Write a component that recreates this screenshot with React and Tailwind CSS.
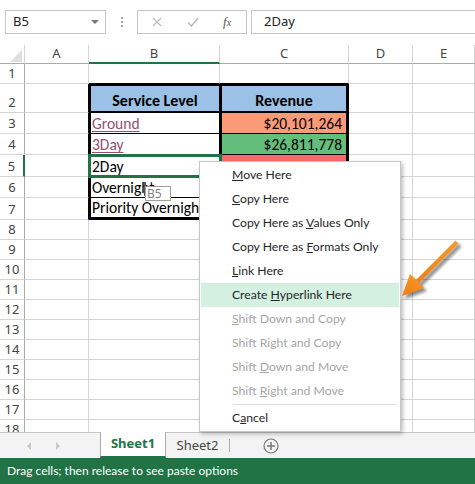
import React from "react";

const ui = "font-['Segoe_UI','Noto_Sans',sans-serif]";
const lato = "font-['Segoe_UI','Lato',sans-serif]";
const cellFont = "font-['Carlito','Lato',sans-serif] text-[15.5px] leading-[18px]";
const base = "shrink-0 h-full flex overflow-hidden whitespace-nowrap";
const grid = "border-r border-b border-[#d4d4d4]";

function RowHead({ n, sel }) {
  return (
    <div
      className={`${base} ${ui} w-[25px] items-end justify-center pb-[1px] text-[13px] leading-[18px] text-[#444] border-b border-b-[#d4d4d4] ${
        sel ? "border-r-2 border-r-[#217346]" : "border-r border-r-[#ababab]"
      }`}
    >
      {n}
    </div>
  );
}

function EmptyRow({ n }) {
  return (
    <div className="flex h-[20px]">
      <RowHead n={n} />
      <div className={`${base} w-[64px] ${grid}`} />
      <div className={`${base} w-[131px] ${grid}`} />
      <div className={`${base} w-[129px] ${grid}`} />
      <div className={`${base} w-[64px] ${grid}`} />
      <div className={`${base} w-[62px] ${grid}`} />
    </div>
  );
}

const aTable = "border-r border-b border-r-black border-b-[#d4d4d4]";

function Arrow() {
  return (
    <svg className="absolute left-[390px] top-[230px]" width="80" height="80" viewBox="390 230 80 80">
      <defs>
        <filter id="blur" x="-20%" y="-20%" width="140%" height="140%">
          <feGaussianBlur stdDeviation="1.6" />
        </filter>
        <linearGradient id="og" x1="0" y1="1" x2="1" y2="0">
          <stop offset="0" stopColor="#f07c12" />
          <stop offset="1" stopColor="#fb9a2b" />
        </linearGradient>
      </defs>
      <g transform="translate(3,3)" filter="url(#blur)" fill="#000" opacity="0.45">
        <polygon points="455.5,240.5 458.5,243.5 419,283 416,280" />
        <polygon points="402,296 410,274 424,288" />
      </g>
      <polygon points="455.5,240.5 458.5,243.5 419,283 416,280" fill="url(#og)" />
      <polygon points="402,296 410,274 424,288" fill="url(#og)" />
    </svg>
  );
}

function MenuItem({ children, disabled, hi }) {
  return (
    <div
      className={`h-[24px] flex items-center pl-[31px] text-[12.2px] ${
        disabled ? "text-[#a6a6a6]" : "text-[#262626]"
      } ${hi ? "bg-[#d3f0e0]" : ""}`}
    >
      <span>{children}</span>
    </div>
  );
}

export default function App() {
  return (
    <div className={`relative w-[475px] h-[484px] bg-white overflow-hidden ${ui}`}>
      {/* formula bar */}
      <div className="h-[45px] flex items-start pt-[10px] pl-[5px]">
        <div className="w-[101px] h-[24px] border border-[#c6c6c6] flex items-center justify-between pl-[7px] pr-[6px]">
          <span className="text-[13px] text-[#222]">B5</span>
          <span className="w-0 h-0 border-l-[4px] border-r-[4px] border-t-[4px] border-l-transparent border-r-transparent border-t-[#777]" />
        </div>
        <div className="w-[31px] h-[24px] flex flex-col items-center justify-center gap-[2px]">
          <span className="w-[2px] h-[2px] bg-[#a6a6a6]" />
          <span className="w-[2px] h-[2px] bg-[#a6a6a6]" />
          <span className="w-[2px] h-[2px] bg-[#a6a6a6]" />
        </div>
        <div className="w-[110px] h-[24px] border border-[#c6c6c6] flex items-center">
          <svg className="ml-[14px]" width="10" height="10" viewBox="0 0 10 10">
            <path d="M1 1 L9 9 M9 1 L1 9" stroke="#bdbdbd" strokeWidth="1.2" />
          </svg>
          <svg className="ml-[25px]" width="12" height="10" viewBox="0 0 12 10">
            <path d="M1 5.5 L4.5 9 L11 1" stroke="#bdbdbd" strokeWidth="1.6" fill="none" />
          </svg>
          <span className="ml-[24px] font-['Liberation_Serif',serif] italic text-[13px] text-[#555]">
            f<span className="text-[10px]">x</span>
          </span>
        </div>
        <div className="ml-[4px] flex-1 h-[24px] border border-r-0 border-[#c6c6c6] flex items-center pl-[12px]">
          <span className="text-[13px] text-[#222]">2Day</span>
        </div>
      </div>

      {/* sheet */}
      <div className="h-[387px] overflow-hidden">
        {/* column headers */}
        <div className="flex h-[19px] text-[13px] text-[#444]">
          <div className={`${base} w-[25px] border-r border-b border-r-[#d4d4d4] border-b-[#ababab] items-end justify-end pr-[2px] pb-[1px]`}>
            <svg width="12" height="12" viewBox="0 0 12 12">
              <polygon points="0,12 12,12 12,0" fill="#dfdfdf" />
            </svg>
          </div>
          <div className={`${base} w-[64px] border-r border-b border-r-[#d4d4d4] border-b-[#ababab] items-center justify-center`}>A</div>
          <div className={`${base} w-[131px] border-r border-b-2 border-r-[#d4d4d4] border-b-[#217346] items-center justify-center`}>B</div>
          <div className={`${base} w-[129px] border-r border-b border-r-[#d4d4d4] border-b-[#ababab] items-center justify-center`}>C</div>
          <div className={`${base} w-[64px] border-r border-b border-r-[#d4d4d4] border-b-[#ababab] items-center justify-center`}>D</div>
          <div className={`${base} w-[62px] border-r border-b border-r-[#d4d4d4] border-b-[#ababab] items-center justify-center`}>E</div>
        </div>

        {/* row 1 */}
        <div className="flex h-[20px]">
          <RowHead n={1} />
          <div className={`${base} w-[64px] ${grid}`} />
          <div className={`${base} w-[131px] border-r border-b border-r-[#d4d4d4] border-b-black`} />
          <div className={`${base} w-[129px] border-r border-b border-r-[#d4d4d4] border-b-black`} />
          <div className={`${base} w-[64px] ${grid}`} />
          <div className={`${base} w-[62px] ${grid}`} />
        </div>

        {/* row 2 */}
        <div className={`flex h-[29px] ${cellFont}`}>
          <RowHead n={2} />
          <div className={`${base} w-[64px] ${aTable}`} />
          <div className={`${base} w-[131px] border-l-2 border-t-2 border-r border-b-2 border-black bg-[#9bc2e6] items-end justify-center font-bold text-[16px] leading-[20px]`}>
            Service Level
          </div>
          <div className={`${base} w-[129px] border-l-2 border-t-2 border-r-[3px] border-b-2 border-black bg-[#9bc2e6] items-end justify-center font-bold text-[16px] leading-[20px]`}>
            Revenue
          </div>
          <div className={`${base} w-[64px] ${grid}`} />
          <div className={`${base} w-[62px] ${grid}`} />
        </div>

        {/* rows 3-7 */}
        {[
          { n: 3, h: "h-[21px]", b: "Ground", link: true, c: "$20,101,264", bg: "bg-[#fa9a79]" },
          { n: 4, h: "h-[21px]", b: "3Day", link: true, c: "$26,811,778", bg: "bg-[#63be7b]" },
          { n: 5, h: "h-[22px]", b: "2Day", c: "$14,523,900", bg: "bg-[#f8696b]", sel: true },
          { n: 6, h: "h-[21px]", b: "Overnight", c: "$18,220,415", bg: "bg-[#fcc47e]" },
          { n: 7, h: "h-[22px]", b: "Priority Overnight", c: "$16,302,118", bg: "bg-[#fba276]", last: true },
        ].map((r) => (
          <div key={r.n} className={`flex ${r.h} ${cellFont}`}>
            <RowHead n={r.n} sel={r.sel} />
            <div className={`${base} w-[64px] ${aTable}`} />
            <div
              className={`${base} w-[131px] border-l-2 border-r border-black items-end pl-[1px] ${
                r.last ? "border-b-[3px]" : "border-b"
              }`}
            >
              {r.link ? <span className="text-[#954f72] underline underline-offset-2">{r.b}</span> : <span className="text-black">{r.b}</span>}
            </div>
            <div
              className={`${base} w-[129px] border-l-2 border-r-[3px] border-black items-end justify-end pr-[4px] ${r.bg} ${
                r.last ? "border-b-[3px]" : "border-b"
              }`}
            >
              {r.c}
            </div>
            <div className={`${base} w-[64px] ${grid}`} />
            <div className={`${base} w-[62px] ${grid}`} />
          </div>
        ))}

        {[8, 9, 10, 11, 12, 13, 14, 15, 16, 17, 18].map((n) => (
          <EmptyRow key={n} n={n} />
        ))}
      </div>

      {/* tab bar */}
      <div className="h-[26px] bg-[#f3f3f3] border-t border-[#c6c6c6] flex items-stretch">
        <div className="w-[100px] flex items-center">
          <span className="ml-[27px] w-0 h-0 border-t-[4px] border-b-[4px] border-r-[4px] border-t-transparent border-b-transparent border-r-[#c8c8c8]" />
          <span className="ml-[25px] w-0 h-0 border-t-[4px] border-b-[4px] border-l-[4px] border-t-transparent border-b-transparent border-l-[#c8c8c8]" />
        </div>
        <div className="-mt-px w-[66px] bg-white border-l border-r border-b-2 border-l-[#ababab] border-r-[#ababab] border-b-[#217346] flex items-center justify-center text-[13px] font-bold text-[#217346]">
          Sheet1
        </div>
        <div className="w-[63px] flex items-center justify-center text-[13px] text-[#444]">Sheet2</div>
        <div className="w-px h-[13px] self-center bg-[#ababab]" />
        <div className="flex items-center ml-[33px]">
          <svg width="16" height="16" viewBox="0 0 16 16">
            <circle cx="8" cy="8" r="7" fill="none" stroke="#777" strokeWidth="1.2" />
            <path d="M8 4 V12 M4 8 H12" stroke="#777" strokeWidth="1.5" />
          </svg>
        </div>
      </div>

      {/* status bar */}
      <div className={`h-[26px] bg-[#217346] flex items-center pl-[7px] text-[12px] text-white ${lato}`}>
        Drag cells; then release to see paste options
      </div>

      {/* selection outline */}
      <div className="absolute left-[88px] top-[154px] w-[134px] h-[24px] border-[3px] border-[#217346]" />

      {/* drag indicator */}
      <div className="absolute left-[144px] top-[182px] w-[2px] h-[14px] bg-[#555]" />
      <div className="absolute left-[145px] top-[186px] w-[26px] h-[15px] border border-[#a0a0a0] bg-white flex items-center pl-[1px] text-[12px] leading-[13px] text-[#808080]">
        B5
      </div>

      {/* context menu */}
      <div className={`absolute left-[199px] top-[161px] w-[202px] h-[271px] bg-white border border-[#c6c6c6] shadow-[2px_2px_4px_rgba(0,0,0,0.25)] p-px ${lato}`}>
        <MenuItem><u>M</u>ove Here</MenuItem>
        <MenuItem><u>C</u>opy Here</MenuItem>
        <MenuItem>Copy Here as <u>V</u>alues Only</MenuItem>
        <MenuItem>Copy Here as <u>F</u>ormats Only</MenuItem>
        <MenuItem><u>L</u>ink Here</MenuItem>
        <MenuItem hi>Create <u>H</u>yperlink Here</MenuItem>
        <MenuItem disabled><u>S</u>hift Down and Copy</MenuItem>
        <MenuItem disabled>Shif<u>t</u> Right and Copy</MenuItem>
        <MenuItem disabled>Shift <u>D</u>own and Move</MenuItem>
        <MenuItem disabled>Shift <u>R</u>ight and Move</MenuItem>
        <div className="h-[3px] flex items-center pl-[32px] pr-[2px]">
          <div className="h-px flex-1 bg-[#e0e0e0]" />
        </div>
        <MenuItem>C<u>a</u>ncel</MenuItem>
      </div>

      <Arrow />
    </div>
  );
}
